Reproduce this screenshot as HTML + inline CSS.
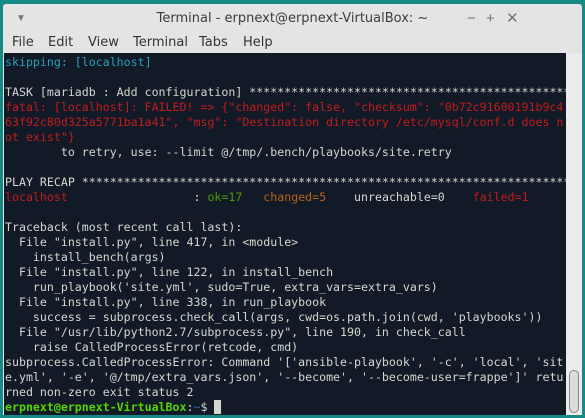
<!DOCTYPE html>
<html><head><style>
body{margin:0;width:585px;height:418px;overflow:hidden;background:#168a84;position:relative;font-family:"Liberation Sans","DejaVu Sans",sans-serif}
.win{position:absolute;left:3px;top:4px;width:579px;height:411px;background:#e4e4e4;border-radius:3px 3px 0 0}
.title{position:absolute;left:0;top:0;width:579px;height:29px;text-align:center;line-height:30px;font-size:13px;color:#3c3c3c;font-family:"DejaVu Sans",sans-serif}
.ctl{position:absolute;top:0;line-height:30px;font-size:15px;color:#777}
.menu{position:absolute;top:29px;left:0;height:21px;font-size:13px;color:#333;font-family:"DejaVu Sans",sans-serif}
.menu span{position:absolute;top:2px;white-space:nowrap}
.term{position:absolute;left:1px;top:49px;width:562px;height:362px;background:#131a27;overflow:hidden}
pre{margin:0;position:absolute;left:1px;top:2px;font-family:"DejaVu Sans Mono",monospace;font-size:11.6px;line-height:15px;color:#d3d7cf}
.c{color:#2a9fb8}.r{color:#c01c1c}.g{color:#4e9a06}.o{color:#b6621a}.p{color:#55d400;font-weight:bold}
.sb{position:absolute;left:563px;top:49px;width:16px;height:362px;background:#ececec}
.th{position:absolute;left:3px;top:317px;width:8px;height:41px;border:1px solid #888;border-radius:5px;background:#dcdcdc}
</style></head><body>
<div class="win">
<div class="title">Terminal - erpnext@erpnext-VirtualBox: ~</div>
<div class="ctl" style="left:13px;font-size:10px">▼</div>
<div class="ctl" style="left:464px">−</div>
<div class="ctl" style="left:483px">+</div>
<div class="ctl" style="left:503px">✕</div>
<div class="menu"><span style="left:9px">File</span><span style="left:45px">Edit</span><span style="left:85px">View</span><span style="left:130px">Terminal</span><span style="left:196px">Tabs</span><span style="left:240px">Help</span></div>
<div class="term"><pre><span class="c">skipping: [localhost]</span>

TASK [mariadb : Add configuration] ***********************************************
<span class="r">fatal: [localhost]: FAILED! =&gt; {"changed": false, "checksum": "0b72c91600191b9c4
63f92c80d325a5771ba1a41", "msg": "Destination directory /etc/mysql/conf.d does n
ot exist"}</span>
        to retry, use: --limit @/tmp/.bench/playbooks/site.retry

PLAY RECAP ***********************************************************************
<span class="r">localhost</span>                  : <span class="g">ok=17</span>   <span class="o">changed=5</span>    unreachable=0    <span class="r">failed=1</span>

Traceback (most recent call last):
  File "install.py", line 417, in &lt;module&gt;
    install_bench(args)
  File "install.py", line 122, in install_bench
    run_playbook('site.yml', sudo=True, extra_vars=extra_vars)
  File "install.py", line 338, in run_playbook
    success = subprocess.check_call(args, cwd=os.path.join(cwd, 'playbooks'))
  File "/usr/lib/python2.7/subprocess.py", line 190, in check_call
    raise CalledProcessError(retcode, cmd)
subprocess.CalledProcessError: Command '['ansible-playbook', '-c', 'local', 'sit
e.yml', '-e', '@/tmp/extra_vars.json', '--become', '--become-user=frappe']' retu
rned non-zero exit status 2
<span class="p">erpnext@erpnext-VirtualBox</span>:<span style="color:#3465a4">~</span>$ <span style="background:#d3d7cf"> </span></pre></div>
<div class="sb"><div class="th"></div></div>
</div>
</body></html>
